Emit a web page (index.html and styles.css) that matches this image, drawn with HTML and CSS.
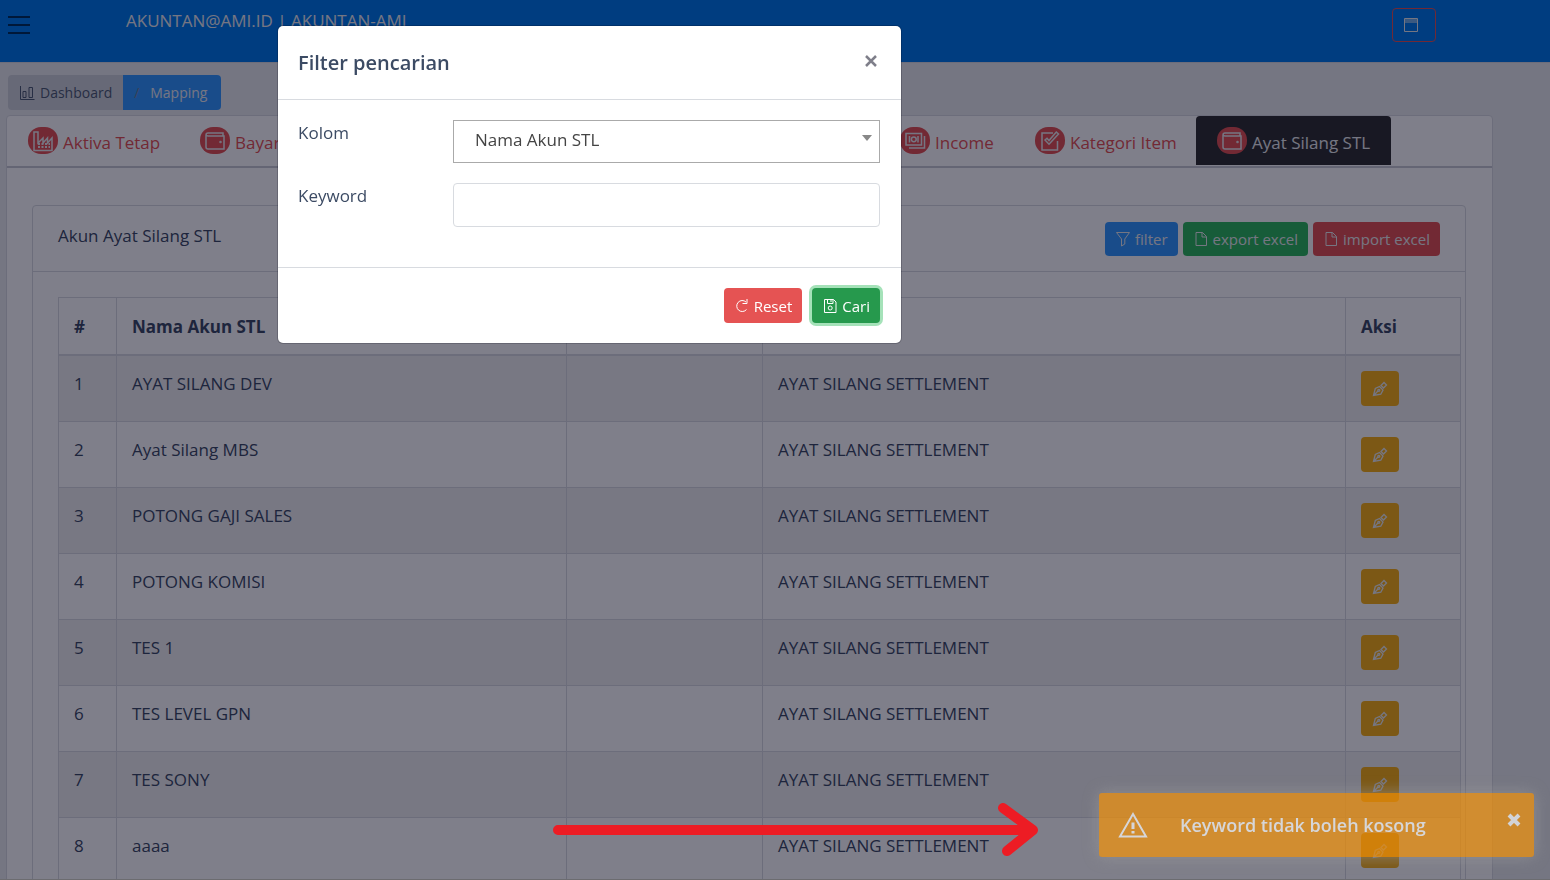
FILE: index.html
```html
<!DOCTYPE html>
<html lang="id">
<head>
<meta charset="utf-8">
<meta name="viewport" content="width=device-width, initial-scale=1">
<title>Mapping</title>
<link rel="stylesheet" href="styles.css">
</head>
<body>
<svg class="sprite" aria-hidden="true">
  <symbol id="i-chart" viewBox="0 0 16 16"><path d="M1.5 1v13.500h14M4 6.500h3v6H4zM10 2.500h3.500v10H10z"/></symbol>
  <symbol id="i-factory" viewBox="0 0 22 22"><path d="M2 20.500V2h4v11l5-5v5l4.500-5v5L20 8v12.500z"/><path d="M6 14h2M9.500 14h2M13 14h2M16.500 14h1.500M6 17h2M9.500 17h2M13 17h2M16.500 17h1.500" stroke-width="2"/></symbol>
  <symbol id="i-wallet" viewBox="0 0 22 22"><path d="M19 6V3H4a2 2 0 0 0-2 2v12a2 2 0 0 0 2 2h16V6H4a2 2 0 0 1-2-1.500"/><circle cx="16.500" cy="12" r=".5"/></symbol>
  <symbol id="i-money" viewBox="0 0 22 22"><path d="M2 3.500h15.500v11.500H2zM5 18h15.500V6M5.500 6v6.500M14 6v6.500"/><circle cx="9.800" cy="9.300" r="2.400"/></symbol>
  <symbol id="i-task" viewBox="0 0 22 22"><path d="M14 3H3v17h15.500v-9"/><path d="M6 10l4 4.200L19.500 4l-2.200-2L10 10.500 8 8.300z"/></symbol>
  <symbol id="i-filter" viewBox="0 0 16 16"><path d="M1.500 1.500h13L9.800 8v5l-3.300 2V8z"/></symbol>
  <symbol id="i-file" viewBox="0 0 16 16"><path d="M3 1.500h6.500L13.500 5.500v9H3zM9 1.500V6h4.500"/></symbol>
  <symbol id="i-window" viewBox="0 0 16 16"><path d="M1.500 1.500h13v13h-13zM1.500 5h13M1.500 3h13"/></symbol>
  <symbol id="i-pen" viewBox="0 0 16 16"><path d="M1.500 14.500l1.800-7 4.200-2 3.500 3.500-2.200 4.200zM1.500 14.500l4.800-4.800M9 4.500l3-3 2.500 2.500-3 3z"/><circle cx="6.800" cy="9.300" r="1"/></symbol>
  <symbol id="i-reload" viewBox="0 0 16 16"><path d="M12.500 11.500a5.500 5.500 0 1 1-.5-7.500M13 1v4.500H8.500"/></symbol>
  <symbol id="i-save" viewBox="0 0 16 16"><path d="M2.500 1.500h9l2.500 2.500v10.500H2.500zM5.500 1.500v4h5.500v-4M9 2v2"/><circle cx="8.200" cy="10" r="2"/></symbol>
  <symbol id="i-warn" viewBox="0 0 30 26"><path d="M15 2l13 22.500H2z"/><path d="M15 10.500v6.500M15 19v2.500" stroke-width="3"/></symbol>
  <symbol id="i-close" viewBox="0 0 14 14"><path d="M2 2l10 10M12 2l-10 10"/></symbol>
</svg>

<header class="topbar">
  <button class="menu" aria-label="Menu"><span></span><span></span><span></span></button>
  <span class="account">AKUNTAN@AMI.ID | AKUNTAN-AMI</span>
  <button class="window-btn" aria-label="Window"><svg class="icon"><use href="#i-window"/></svg></button>
</header>

<main class="page">
  <nav class="crumbs" aria-label="Breadcrumb">
    <a class="crumb" href="#"><svg class="icon"><use href="#i-chart"/></svg>Dashboard</a>
    <a class="crumb crumb-active" href="#"><span class="slash">/</span>Mapping</a>
  </nav>

  <section class="card">
    <nav class="tabs">
      <a class="tab tab-first" href="#"><span class="pill"><svg><use href="#i-factory"/></svg></span>Aktiva Tetap</a>
      <a class="tab tab-wide" href="#"><span class="pill"><svg><use href="#i-wallet"/></svg></span>Bayar</a>
      <a class="tab tab-income" href="#"><span class="pill"><svg><use href="#i-money"/></svg></span>Income</a>
      <a class="tab tab-item" href="#"><span class="pill"><svg><use href="#i-task"/></svg></span>Kategori Item</a>
      <a class="tab tab-active" href="#"><span class="pill"><svg><use href="#i-wallet"/></svg></span>Ayat Silang STL</a>
    </nav>
    <div class="panel">
      <div class="panel-head">
        <span>Akun Ayat Silang STL</span>
        <div class="actions">
          <button class="btn blue"><svg class="icon"><use href="#i-filter"/></svg>filter</button>
          <button class="btn green"><svg class="icon"><use href="#i-file"/></svg>export excel</button>
          <button class="btn red"><svg class="icon"><use href="#i-file"/></svg>import excel</button>
        </div>
      </div>
      <div class="panel-body">
        <table class="grid">
          <colgroup><col class="c-no"><col class="c-name"><col class="c-code"><col class="c-type"><col class="c-act"></colgroup>
          <thead><tr><th>#</th><th>Nama Akun STL</th><th></th><th></th><th>Aksi</th></tr></thead>
          <tbody>
            <tr><td>1</td><td>AYAT SILANG DEV</td><td></td><td>AYAT SILANG SETTLEMENT</td><td><button class="btn amber" aria-label="Edit"><svg class="icon"><use href="#i-pen"/></svg></button></td></tr>
            <tr><td>2</td><td>Ayat Silang MBS</td><td></td><td>AYAT SILANG SETTLEMENT</td><td><button class="btn amber" aria-label="Edit"><svg class="icon"><use href="#i-pen"/></svg></button></td></tr>
            <tr><td>3</td><td>POTONG GAJI SALES</td><td></td><td>AYAT SILANG SETTLEMENT</td><td><button class="btn amber" aria-label="Edit"><svg class="icon"><use href="#i-pen"/></svg></button></td></tr>
            <tr><td>4</td><td>POTONG KOMISI</td><td></td><td>AYAT SILANG SETTLEMENT</td><td><button class="btn amber" aria-label="Edit"><svg class="icon"><use href="#i-pen"/></svg></button></td></tr>
            <tr><td>5</td><td>TES 1</td><td></td><td>AYAT SILANG SETTLEMENT</td><td><button class="btn amber" aria-label="Edit"><svg class="icon"><use href="#i-pen"/></svg></button></td></tr>
            <tr><td>6</td><td>TES LEVEL GPN</td><td></td><td>AYAT SILANG SETTLEMENT</td><td><button class="btn amber" aria-label="Edit"><svg class="icon"><use href="#i-pen"/></svg></button></td></tr>
            <tr><td>7</td><td>TES SONY</td><td></td><td>AYAT SILANG SETTLEMENT</td><td><button class="btn amber" aria-label="Edit"><svg class="icon"><use href="#i-pen"/></svg></button></td></tr>
            <tr><td>8</td><td>aaaa</td><td></td><td>AYAT SILANG SETTLEMENT</td><td><button class="btn amber" aria-label="Edit"><svg class="icon"><use href="#i-pen"/></svg></button></td></tr>
          </tbody>
        </table>
      </div>
    </div>
  </section>
</main>

<div class="backdrop"></div>

<div class="modal" role="dialog" aria-labelledby="modal-title">
  <div class="modal-head">
    <h2 id="modal-title">Filter pencarian</h2>
    <button class="modal-close" aria-label="Close"><svg><use href="#i-close"/></svg></button>
  </div>
  <form class="modal-body">
    <label for="kolom">Kolom</label>
    <div class="select-wrap"><select id="kolom"><option>Nama Akun STL</option></select></div>
    <label for="keyword">Keyword</label>
    <input id="keyword" type="text">
  </form>
  <div class="modal-foot">
    <button class="btn red"><svg class="icon"><use href="#i-reload"/></svg>Reset</button>
    <button class="btn green focused"><svg class="icon"><use href="#i-save"/></svg>Cari</button>
  </div>
</div>

<svg class="arrow" viewBox="0 0 488 56" aria-hidden="true"><path d="M6 28h474M451 6l30 22-26 21"/></svg>

<div class="toast" role="alert">
  <svg class="toast-icon"><use href="#i-warn"/></svg>
  <span class="toast-text">Keyword tidak boleh kosong</span>
  <button class="toast-close" aria-label="Close"><svg><use href="#i-close"/></svg></button>
</div>
</body>
</html>
```

FILE: styles.css
```css
* { box-sizing: border-box; }

body {
  margin: 0;
  height: 100vh;
  overflow: hidden;
  background: #ebedef;
  color: #3c4b64;
  font: 17px/26px "Open Sans", "Noto Sans", sans-serif;
}

a { color: inherit; text-decoration: none; }
button { font: inherit; cursor: pointer; }
svg { fill: none; stroke: currentColor; }
.sprite { display: none; }
.icon { width: 16px; height: 16px; flex: none; }

.topbar {
  display: flex;
  align-items: flex-start;
  height: 63px;
  padding: 8px 114px 0 8px;
  background: #007aeb;
  border-bottom: 1px solid #d8dbe0;
}
.menu {
  display: flex;
  flex-direction: column;
  gap: 6px;
  width: 22px;
  margin-top: 8px;
  padding: 0;
  border: 0;
  background: none;
}
.menu span { height: 2px; background: #00305c; }
.account { margin-left: 96px; color: #ebedef; line-height: 25px; }
.window-btn {
  width: 44px;
  height: 34px;
  margin-left: auto;
  padding: 0 0 0 10px;
  border: 1px solid #e55353;
  border-radius: 4px;
  background: none;
  color: #ebedef;
  text-align: left;
}
.window-btn .icon { display: block; }

.page {
  height: calc(100vh - 63px);
  padding: 12px 57px 0 6px;
  overflow: hidden;
}
.crumbs { display: flex; width: max-content; margin-left: 2px; font-size: 14px; }
.crumb {
  display: flex;
  align-items: center;
  gap: 5px;
  height: 35px;
  padding: 0 11px;
  background: #ced2d8;
  border-radius: 4px 0 0 4px;
  color: #4f5d73;
}
.crumb-active {
  padding-right: 14px;
  background: #3399ff;
  color: #ebedef;
  border-radius: 0 4px 4px 0;
}
.slash { width: 11px; color: #768192; }

.card {
  margin-top: 5px;
  background: #fff;
  border: 1px solid #d8dbe0;
  border-radius: 4px;
}
.tabs { display: flex; height: 52px; border-bottom: 2px solid #c8cad2; }
.tab {
  display: flex;
  align-items: center;
  gap: 5px;
  height: 49px;
  padding: 4px 21px 0;
  color: #e55353;
  white-space: nowrap;
}
.tab-first { width: 172px; }
.tab-wide { min-width: 700px; }
.tab-income { width: 135px; }
.tab-item { width: 182px; }
.tab-active { background: #313131; color: #ebedef; border-radius: 4px 4px 0 0; }
.pill {
  display: grid;
  flex: none;
  place-items: center;
  width: 30px;
  height: 27px;
  margin-bottom: 4px;
  background: #e55353;
  border-radius: 13px;
  color: #ebedef;
}
.pill svg { width: 22px; height: 22px; stroke-width: 1.5; }

.panel { margin: 37px 26px 37px 25px; border: 1px solid #d8dbe0; border-radius: 4px; }
.panel-head {
  display: flex;
  justify-content: space-between;
  padding: 16px 25px 15px;
  border-bottom: 1px solid #d8dbe0;
}
.actions { display: flex; gap: 5px; }
.actions .btn { height: 34px; }
.panel-head > span { line-height: 28px; }

.btn {
  display: flex;
  align-items: center;
  gap: 4px;
  height: 35px;
  padding: 0 10px;
  border: 0;
  border-radius: 4px;
  color: #fff;
  font-size: 15px;
}
.page .btn { color: #ebedef; }
.blue { background: #3399ff; }
.green { background: #2eb85c; }
.red { background: #e55353; }
.page .amber { width: 38px; padding: 0 11px; background: #f9b115; stroke-width: 1.3; }

.panel-body { padding: 25px 4px 25px 25px; }
.grid { width: 100%; table-layout: fixed; border-collapse: collapse; }
.grid th, .grid td {
  padding: 15px;
  border: 1px solid #d8dbe0;
  text-align: left;
  vertical-align: top;
}
.grid td { height: 66px; }
.grid th { height: 57px; padding-top: 16px; padding-bottom: 14px; border-bottom-width: 2px; font-weight: 700; }
.grid tbody tr:nth-child(odd) { background: rgba(0, 0, 21, .06); }
.c-no { width: 58px; }
.c-name { width: 450px; }
.c-code { width: 196px; }
.c-act { width: 115px; }

.backdrop {
  position: fixed;
  inset: 0;
  background: rgba(0, 0, 21, .5);
  border-bottom: 1px solid #6c6c70;
}

.modal {
  position: fixed;
  top: 26px;
  left: 278px;
  width: 623px;
  background: #fff;
  border-radius: 5px;
  box-shadow: 0 0 0 1px rgba(0, 0, 21, .2);
}
.modal-head {
  display: flex;
  align-items: center;
  justify-content: space-between;
  height: 74px;
  padding: 0 23px 0 20px;
  border-bottom: 1px solid #d8dbe0;
}
.modal-head h2 { margin: 0; font-size: 20px; font-weight: 600; }
.modal-close, .toast-close { padding: 0; border: 0; background: none; }
.modal-close { margin-bottom: 4px; color: #7f7f8a; }
.modal-close svg, .toast-close svg { display: block; width: 14px; height: 14px; stroke-width: 2.5; }
.modal-body {
  display: grid;
  grid-template-columns: 135px 1fr;
  gap: 20px;
  padding: 20px 21px 40px 20px;
}
.modal-body select, .modal-body input {
  width: 100%;
  height: 44px;
  padding: 0 22px;
  border: 1px solid #d8dbe0;
  border-radius: 4px;
  background: #fff;
  font: inherit;
  color: #444;
}
.modal-body select {
  height: 43px;
  padding: 0 21px 4px;
  appearance: none;
  border-color: #aaa;
  border-radius: 0;
}
.select-wrap { position: relative; height: 43px; }
.select-wrap::after {
  content: "";
  position: absolute;
  top: 15px;
  right: 8px;
  border: 5px solid transparent;
  border-top: 6px solid #888;
  border-bottom: 0;
}
.modal-foot {
  display: flex;
  justify-content: flex-end;
  gap: 10px;
  padding: 20px 21px 20px 20px;
  border-top: 1px solid #d8dbe0;
}
.focused { background: #26994d; box-shadow: 0 0 0 3px #a5e2b9; }

.arrow {
  position: fixed;
  right: 510px;
  bottom: 22px;
  width: 488px;
  height: 56px;
  stroke: #ed1c24;
  stroke-width: 10;
  stroke-linecap: round;
  stroke-linejoin: round;
}

.toast {
  position: fixed;
  right: 16px;
  bottom: 23px;
  display: flex;
  align-items: center;
  width: 435px;
  height: 64px;
  padding: 0 13px 0 19px;
  background: #f89406;
  border-radius: 3px;
  box-shadow: 0 0 16px #999;
  color: #fff;
  opacity: .68;
}
.toast-icon { width: 30px; height: 26px; stroke-width: 2; }
.toast-text { margin-left: 32px; font-size: 18px; font-weight: 600; }
.toast-close { margin: 0 0 10px auto; color: #fff; }
.toast-close svg { stroke-width: 4; }
```
